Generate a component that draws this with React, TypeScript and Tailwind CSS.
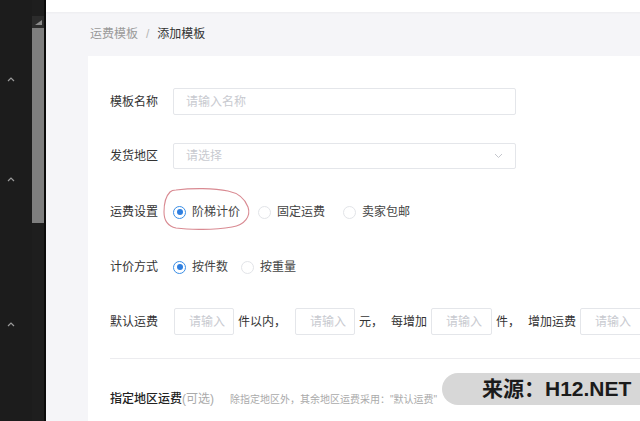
import React from "react";

const FONT = { fontFamily: '"Liberation Sans", "Noto Sans CJK SC", sans-serif' };

function Chevron() {
  return (
    <svg width="8" height="6" viewBox="0 0 8 6" className="text-[#9a9a9a]">
      <path d="M1 5 L4 2 L7 5" fill="none" stroke="currentColor" strokeWidth="1.2" />
    </svg>
  );
}

function Radio({ checked, label }: { checked?: boolean; label: string }) {
  return (
    <label className="flex items-center gap-[6px]">
      <span
        className={
          checked
            ? "grid size-[13px] place-items-center rounded-full border border-[#3a8ee6] bg-white"
            : "grid size-[13px] place-items-center rounded-full border border-[#e2e4e8] bg-white"
        }
      >
        {checked && <span className="size-[6px] rounded-full bg-[#2f7fe0]" />}
      </span>
      <span className="text-[12px] text-[#444]">{label}</span>
    </label>
  );
}

function SmallInput({ w = "w-[60px]" }: { w?: string }) {
  return (
    <div className={`${w} flex h-[27px] items-center rounded-[2px] border border-[#e4e6ea] bg-white pl-[14px] text-[12px] text-[#c8cad0]`}>
      请输入
    </div>
  );
}

export default function App() {
  return (
    <div className="relative flex h-[421px] w-[640px] overflow-hidden bg-white" style={FONT}>
      {/* Sidebar */}
      <aside className="flex w-[32px] shrink-0 flex-col items-center bg-[#1c1c1c] pr-[10px] pt-[76px]">
        <Chevron />
        <div className="mt-[94px]">
          <Chevron />
        </div>
        <div className="mt-[139px]">
          <Chevron />
        </div>
      </aside>

      {/* Scrollbar */}
      <div className="flex w-[12px] shrink-0 flex-col bg-[#1e1e1e]">
        <div className="h-[16px]" />
        <div className="flex h-[12px] items-center justify-center bg-[#2c2c2c]">
          <svg width="7" height="5" viewBox="0 0 7 5">
            <path d="M0 5 L7 5 L7 0 Z" fill="#8a8a8a" />
          </svg>
        </div>
        <div className="h-[195px] bg-[#7e7e7e]" />
      </div>
      <div className="w-[2px] shrink-0 bg-[#0b0b0b]" />

      {/* Main */}
      <main className="flex flex-1 flex-col bg-[#f5f5f8]">
        <div className="h-[12px] bg-white shadow-[0_1px_2px_rgba(0,0,0,0.04)]" />
        <div className="flex h-[44px] items-center pl-[44px] text-[12px]">
          <span className="text-[#9a9a9a]">运费模板</span>
          <span className="mx-[8px] text-[#b5b5b5]">/</span>
          <span className="text-[#333]">添加模板</span>
        </div>

        <section className="relative ml-[42px] flex-1 bg-white pl-[22px] pt-[32px]">
          {/* 模板名称 */}
          <div className="flex h-[27px] items-center">
            <span className="w-[63px] text-[12px] text-[#333]">模板名称</span>
            <div className="flex h-[27px] w-[343px] items-center rounded-[2px] border border-[#e4e6ea] pl-[12px] text-[12px] text-[#c8cad0]">
              请输入名称
            </div>
          </div>

          {/* 发货地区 */}
          <div className="mt-[28px] flex h-[26px] items-center">
            <span className="w-[63px] text-[12px] text-[#333]">发货地区</span>
            <div className="flex h-[26px] w-[343px] items-center justify-between rounded-[2px] border border-[#e4e6ea] pl-[12px] pr-[12px] text-[12px] text-[#c8cad0]">
              请选择
              <svg width="9" height="6" viewBox="0 0 9 6">
                <path d="M1 1 L4.5 4.5 L8 1" fill="none" stroke="#c4c6cc" strokeWidth="1" />
              </svg>
            </div>
          </div>

          {/* 运费设置 */}
          <div className="relative mt-[30px] flex h-[26px] items-center">
            <span className="w-[63px] text-[12px] text-[#333]">运费设置</span>
            <div className="flex items-center gap-[18px]">
              <Radio checked label="阶梯计价" />
              <Radio label="固定运费" />
              <Radio label="卖家包邮" />
            </div>
            <svg
              className="pointer-events-none absolute left-[52px] top-[-12px]"
              width="90"
              height="44"
              viewBox="0 0 90 44"
            >
              <path
                d="M14 3 C 30 1, 52 1, 66 4 C 76 6, 83 12, 86 20 C 89 29, 83 38, 70 40 C 52 43, 28 43, 14 41 C 5 39, 2 33, 2 25 C 2 17, 3 10, 8 5 C 10 3, 12 3, 14 3"
                fill="none"
                stroke="#d98a92"
                strokeWidth="1.1"
              />
            </svg>
          </div>

          {/* 计价方式 */}
          <div className="mt-[29px] flex h-[26px] items-center">
            <span className="w-[63px] text-[12px] text-[#333]">计价方式</span>
            <div className="flex items-center gap-[13px]">
              <Radio checked label="按件数" />
              <Radio label="按重量" />
            </div>
          </div>

          {/* 默认运费 */}
          <div className="mt-[28px] flex h-[27px] items-center whitespace-nowrap text-[12px] text-[#333]">
            <span className="w-[64px]">默认运费</span>
            <SmallInput />
            <span className="ml-[4px] w-[57px]">件以内，</span>
            <SmallInput w="w-[60px]" />
            <span className="ml-[4px] w-[32px]">元，</span>
            <span className="w-[40px]">每增加</span>
            <SmallInput w="w-[61px]" />
            <span className="ml-[4px] w-[32px]">件，</span>
            <span className="w-[52px]">增加运费</span>
            <SmallInput w="w-[70px]" />
          </div>

          <div className="mt-[23px] h-px bg-[#ececef]" />

          {/* 指定地区运费 */}
          <div className="mt-[31px] flex items-center whitespace-nowrap">
            <span className="text-[12px] font-medium text-[#222]">指定地区运费</span>
            <span className="text-[12px] text-[#aaa]">(可选)</span>
            <span className="ml-[16px] text-[10px] text-[#aaa]">除指定地区外，其余地区运费采用："默认运费"</span>
          </div>
        </section>
      </main>

      {/* Watermark */}
      <div className="absolute left-[442px] top-[373px] flex h-[32px] w-[198px] items-center rounded-l-full bg-[#d7d7d7] pl-[40px]">
        <span className="text-[21px] font-bold text-[#1b1b1b]">来源：H12.NET</span>
      </div>
    </div>
  );
}
